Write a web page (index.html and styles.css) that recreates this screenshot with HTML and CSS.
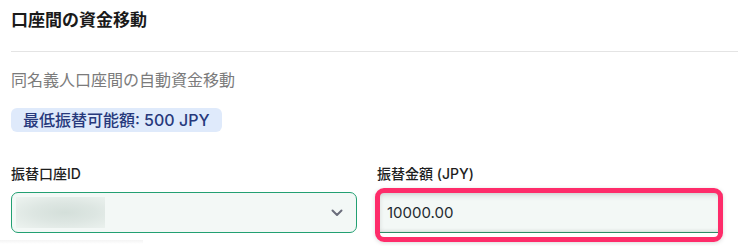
FILE: index.html
```html
<!DOCTYPE html>
<html lang="ja">
<head>
<meta charset="utf-8">
<link rel="stylesheet" href="styles.css">
</head>
<body>
<div class="card">
  <h2 class="title">口座間の資金移動</h2>
  <hr class="divider">
  <div class="body">
    <p class="subtitle">同名義人口座間の自動資金移動</p>
    <span class="badge">最低振替可能額: 500 JPY</span>
    <div class="row">
      <div class="field">
        <label class="label">振替口座ID</label>
        <div class="select">
          <span class="blurred"></span>
          <svg class="chevron" width="12" height="8" viewBox="0 0 12 8"><path d="M1.5 1.5 L6 6 L10.5 1.5" fill="none" stroke="#6b6e7c" stroke-width="2" stroke-linecap="round" stroke-linejoin="round"/></svg>
        </div>
        <div class="ghost"></div>
      </div>
      <div class="field">
        <label class="label">振替金額 (JPY)</label>
        <div class="input-wrap">
          <div class="input">10000.00</div>
          <div class="highlight"></div>
        </div>
      </div>
    </div>
  </div>
</div>
</body>
</html>
```
FILE: styles.css
```css
* { box-sizing: border-box; }
html, body { margin: 0; padding: 0; background: #ffffff; }
body {
  font-family: Inter, "Noto Sans CJK JP", sans-serif;
  color: #1c1c1c;
  width: 738px;
  height: 246px;
  overflow: hidden;
}
.card { padding-left: 11px; }
.title {
  margin: 8px 0 0 0;
  font-size: 17px;
  line-height: 24px;
  font-weight: 700;
  color: #1a1a1a;
}
.divider {
  border: 0;
  border-top: 1px solid #e4e4e4;
  margin: 19px 0 0 0;
}
.body { padding-right: 15px; }
.subtitle {
  margin: 16px 0 0 0;
  font-size: 16px;
  line-height: 24px;
  color: #7b7b7b;
}
.badge {
  display: inline-block;
  margin-top: 16px;
  height: 24px;
  line-height: 24px;
  padding: 0 12px;
  border-radius: 6px;
  background: #dfeafb;
  color: #27397c;
  font-size: 16px;
  font-weight: 500;
}
.row {
  display: grid;
  grid-template-columns: 346px 346px;
  column-gap: 20px;
  margin-top: 32px;
}
.field { display: flex; flex-direction: column; position: relative; }
.label {
  font-size: 14px;
  line-height: 20px;
  font-weight: 500;
  color: #1e1e1e;
  margin-bottom: 8px;
}
.select {
  height: 41px;
  border: 1px solid #22a072;
  border-radius: 7px;
  background: #f3f8f6;
  display: flex;
  align-items: center;
  justify-content: space-between;
  padding: 0 13px 0 4px;
}
.blurred {
  width: 89px;
  height: 31px;
  background: radial-gradient(ellipse at 55% 50%, #d4dfda 0%, #dde6e2 45%, #edf3f0 100%);
}
.chevron { display: block; }
.ghost {
  position: absolute;
  left: -11px;
  top: 76px;
  width: 143px;
  height: 4px;
  background: linear-gradient(#f4f4f4, #ffffff);
}
.input-wrap { position: relative; }
.input {
  height: 41px;
  background: #f3f8f6;
  border-bottom: 1px solid #2e8a66;
  border-radius: 4px 4px 0 0;
  box-shadow: inset 0 3px 6px rgba(0, 0, 0, 0.12), inset 3px 0 5px rgba(0, 0, 0, 0.08), inset -3px 0 5px rgba(0, 0, 0, 0.08);
  font-size: 15px;
  line-height: 41px;
  padding-left: 10px;
  color: #1f2a30;
}
.highlight {
  position: absolute;
  left: -2px;
  right: 0;
  top: -4px;
  bottom: -9px;
  border: 5px solid #fe2c6a;
  border-radius: 9px;
  box-shadow: 0 1px 4px rgba(0,0,0,0.15);
}
```
